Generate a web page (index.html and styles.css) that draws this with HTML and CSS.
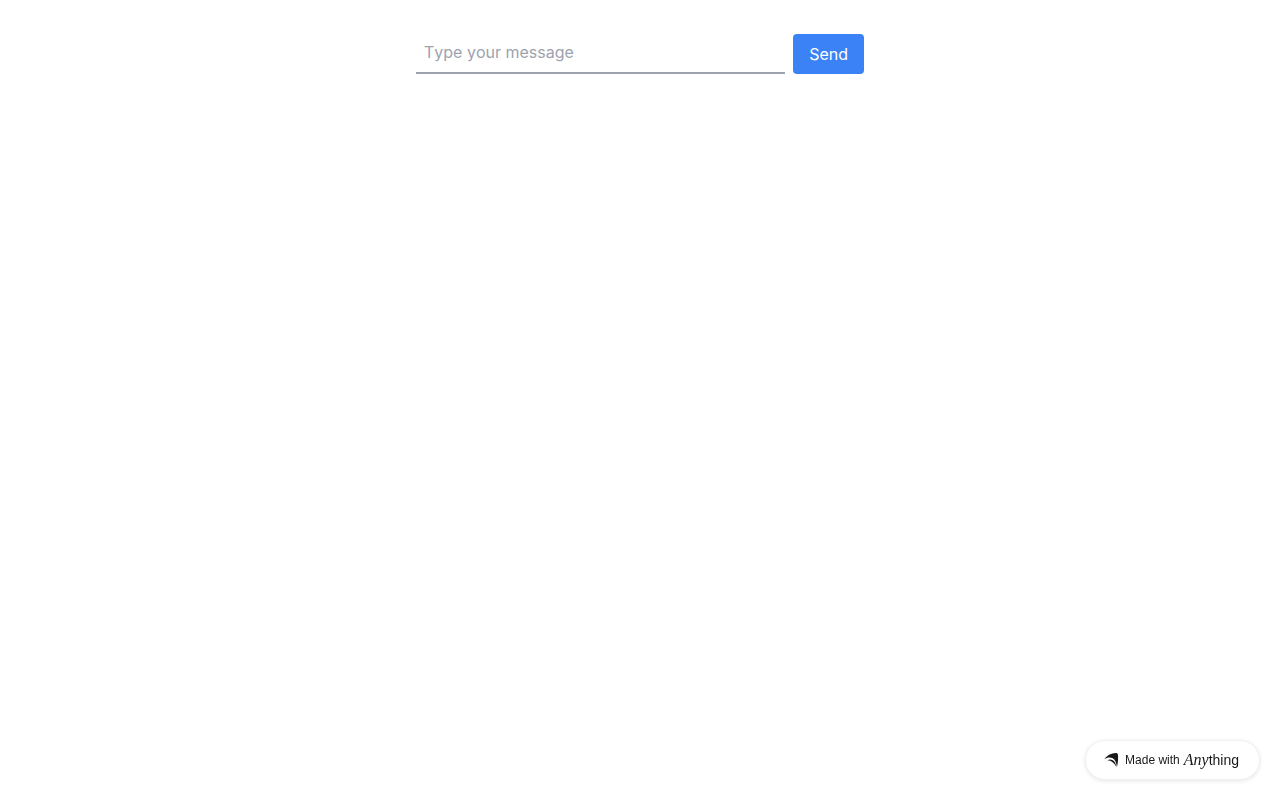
FILE: index.html
```html
<!DOCTYPE html>
<html lang="en">
<head>
<meta charset="utf-8">
<meta name="viewport" content="width=device-width, initial-scale=1">
<title>Message</title>
<link rel="stylesheet" href="styles.css">
</head>
<body>
<main class="page">
  <form class="composer">
    <input class="composer-input" type="text" placeholder="Type your message" aria-label="Type your message">
    <button class="composer-send" type="button">Send</button>
  </form>
</main>
<a class="badge" href="#">
  <svg class="badge-icon" viewBox="0 0 16 16" aria-hidden="true"><path d="M1.200 7C4.500 3 8.500 1 12.500 1C14 1 14.900 1.600 15 3C15.300 7 15 11 13.900 15.200C13.400 10.500 12 7.400 9.200 6C6.800 4.900 4 5.500 1.200 7Z"/><path d="M4.300 8.300C6 7.300 8 7.200 9.800 8.200C11.800 9.400 12.800 11.500 13.200 14.700C11.500 11.300 8.500 8.500 4.300 8.300Z"/></svg>
  <span class="badge-label">Made with</span>
  <span class="badge-brand"><span class="brand-script">Any</span><span class="brand-sans">thing</span></span>
</a>
</body>
</html>
```
FILE: styles.css
```css
* {
  box-sizing: border-box;
}

body {
  margin: 0;
  background: #fff;
  font-family: Inter, "Liberation Sans", sans-serif;
  font-size: 16px;
  line-height: 24px;
}

.page {
  max-width: 480px;
  margin: 0 auto;
  padding: 34px 16px;
}

.composer {
  display: flex;
  gap: 8px;
}

.composer-input {
  flex: 1;
  min-width: 0;
  padding: 4px 8px 6px;
  border: 0;
  border-bottom: 2px solid #9ca3af;
  background: transparent;
  font: inherit;
  font-kerning: none;
  outline: 0;
}

.composer-input::placeholder {
  color: #9ca3af;
  opacity: 1;
}

.composer-send {
  padding: 8px 16px;
  border: 0;
  border-radius: 4px;
  background: #3b82f6;
  color: #fff;
  font: inherit;
}

.badge {
  position: fixed;
  right: 20px;
  bottom: 20px;
  display: flex;
  align-items: center;
  height: 40px;
  padding: 0 20px 0 17px;
  border: 1px solid #f0f0f0;
  border-radius: 20px;
  background: #fff;
  box-shadow: 0 1px 4px rgba(0, 0, 0, 0.1);
  color: #18181b;
  text-decoration: none;
  white-space: nowrap;
}

.badge-icon {
  width: 16px;
  height: 16px;
  margin-right: 6px;
  fill: #18181b;
}

.badge-label {
  margin-right: 4px;
  font-family: "Liberation Sans", sans-serif;
  font-size: 12px;
}

.badge-brand {
  padding-bottom: 2px;
}

.brand-script {
  font-family: "Liberation Serif", serif;
  font-size: 16px;
  font-style: italic;
}

.brand-sans {
  font-family: "Liberation Sans", sans-serif;
  font-size: 14px;
}
```
